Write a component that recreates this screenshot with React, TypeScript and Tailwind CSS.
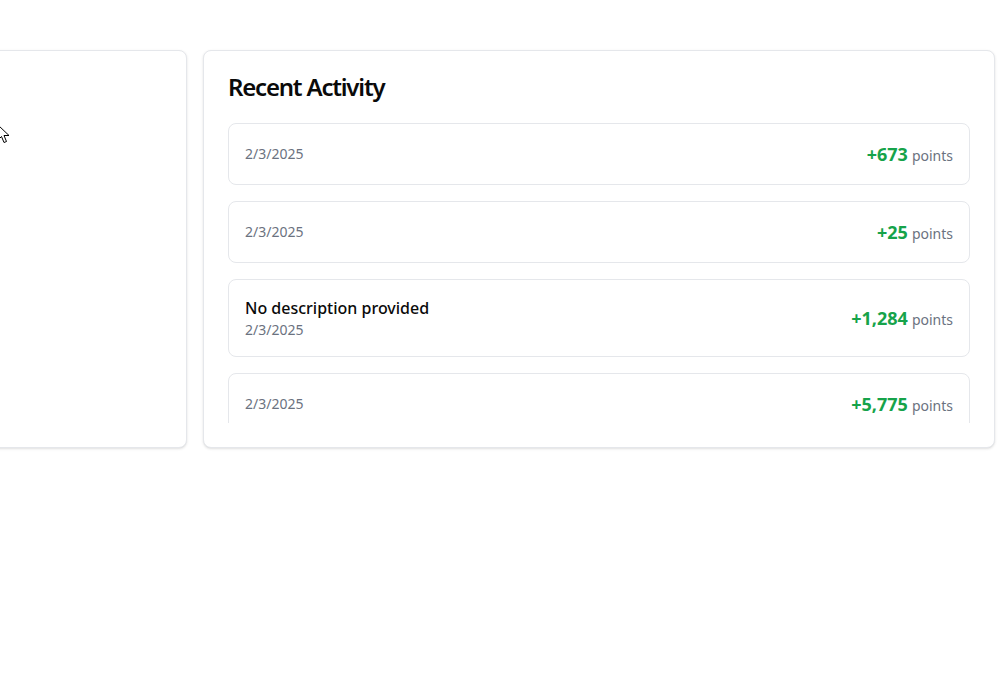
const activity = [
  { id: 1, description: '', date: '2/3/2025', points: 673 },
  { id: 2, description: '', date: '2/3/2025', points: 25 },
  { id: 3, description: 'No description provided', date: '2/3/2025', points: 1284 },
  { id: 4, description: '', date: '2/3/2025', points: 5775 },
]

function Cursor() {
  return (
    <svg className="absolute left-[-3px] top-[124px]" width="14" height="21" viewBox="0 0 14 21">
      <path d="M1 1 L1 16 L4.5 12.5 L7 18.5 L9.5 17.5 L7 11.5 L12 11.5 Z" fill="#fff" stroke="#000" strokeWidth="1" strokeLinejoin="round" />
    </svg>
  )
}

export default function App() {
  return (
    <div className="relative min-h-[678px] w-[999px] overflow-hidden bg-white pt-[50px] font-['Noto_Sans',sans-serif] text-[#0a0a0a]">
      <div className="flex gap-4">
        {/* Left card, scrolled partly out of view */}
        <div className="ml-[-213px] h-[398px] w-[400px] shrink-0 rounded-lg border border-[#e5e7eb] bg-white shadow-sm" />

        {/* Recent Activity */}
        <div className="w-[792px] shrink-0 rounded-lg border border-[#e5e7eb] bg-white p-6 shadow-sm">
          <h2 className="mb-6 text-2xl leading-none font-semibold tracking-tighter">Recent Activity</h2>
          <div className="flex max-h-[300px] flex-col gap-4 overflow-hidden">
            {activity.map((a) => (
              <div
                key={a.id}
                className="flex shrink-0 items-center justify-between rounded-lg border border-[#e5e7eb] p-4"
              >
                <div>
                  {a.description && <p className="text-base leading-6 font-medium">{a.description}</p>}
                  <p className="text-sm leading-5 text-[#6b7280]">{a.date}</p>
                </div>
                <div className="flex items-baseline gap-1">
                  <span className="text-lg leading-7 font-bold text-[#16a34a]">+{a.points.toLocaleString('en-US')}</span>
                  <span className="text-sm text-[#6b7280]">points</span>
                </div>
              </div>
            ))}
          </div>
        </div>
      </div>
      <Cursor />
    </div>
  )
}
